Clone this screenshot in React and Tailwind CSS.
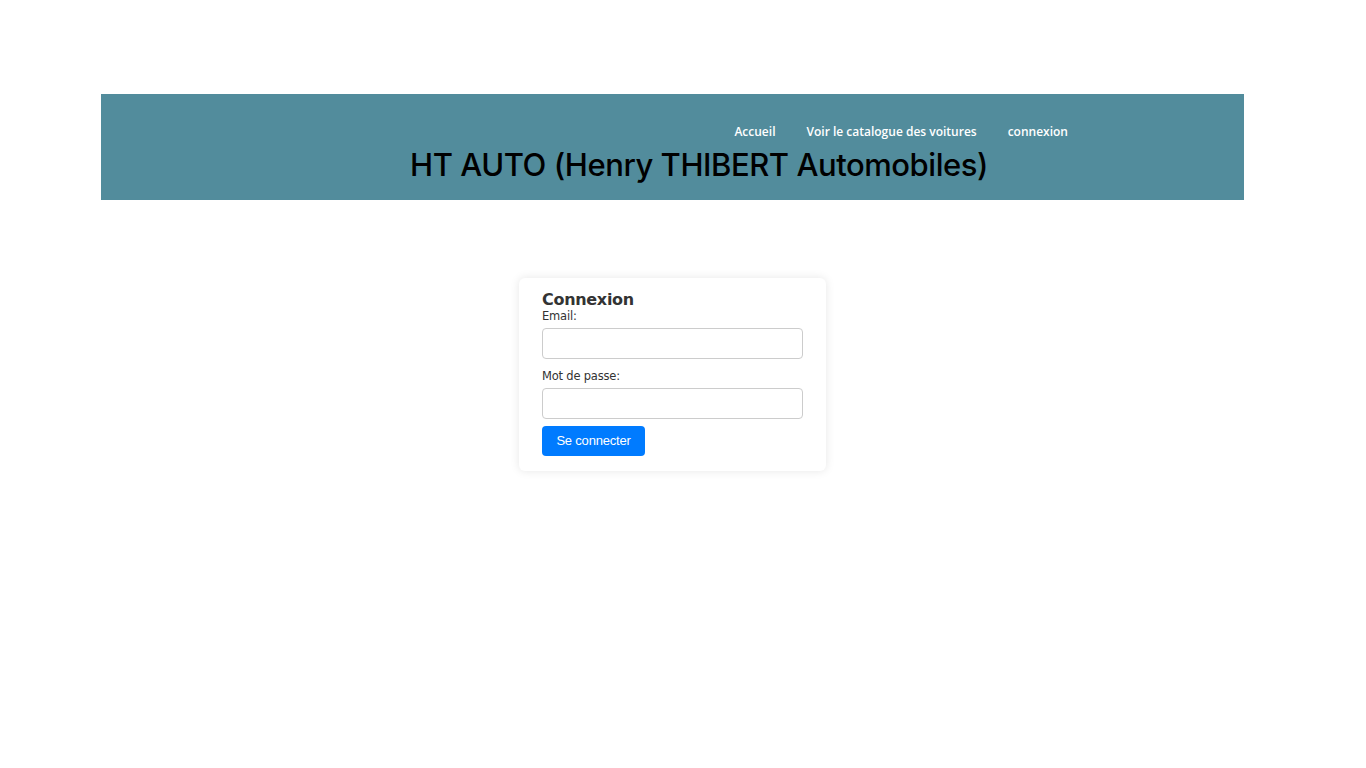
export default function App() {
  return (
    <div className="min-h-screen bg-white pt-[94px]">
      <div className="ml-[101px] w-[1143px]">
        <header className="flex h-[106px] flex-col bg-[#528c9c] pt-[23px]">
          <nav className="flex justify-end gap-[31px] pr-[176px] font-['Open_Sans',sans-serif] text-[12px] font-semibold leading-[30px] text-white">
            <a href="#">Accueil</a>
            <a href="#">Voir le catalogue des voitures</a>
            <a href="#">connexion</a>
          </nav>
          <h1 className="pl-[53px] text-center font-['Inter',sans-serif] text-[31px] font-medium leading-[36px] tracking-[-0.45px] text-black">
            HT AUTO (Henry THIBERT Automobiles)
          </h1>
        </header>

        <main className="flex justify-center pt-[78px]">
          <div className="w-[307px] rounded-md bg-white px-[23px] pb-[15px] pt-[12px] shadow-[0_0_10px_rgba(0,0,0,0.1)]">
            <h2 className="font-['DejaVu_Sans',sans-serif] text-[16px] font-bold leading-[20px] tracking-[-0.3px] text-[#333]">
              Connexion
            </h2>
            <form className="font-['DejaVu_Sans',sans-serif] text-[11.5px] tracking-[-0.2px] text-[#333]">
              <label className="-mt-[1px] block leading-[14px]">Email:</label>
              <input
                type="email"
                className="mt-[5px] block h-[31px] w-full rounded-[4px] border border-[#ccc]"
              />
              <label className="mt-[10px] block leading-[14px]">Mot de passe:</label>
              <input
                type="password"
                className="mt-[5px] block h-[31px] w-full rounded-[4px] border border-[#ccc]"
              />
              <button
                type="button"
                className="mt-[7px] h-[30px] w-[103px] rounded-[4px] bg-[#007bff] font-['Liberation_Sans',sans-serif] text-[13px] text-white"
              >
                Se connecter
              </button>
            </form>
          </div>
        </main>
      </div>
    </div>
  );
}
